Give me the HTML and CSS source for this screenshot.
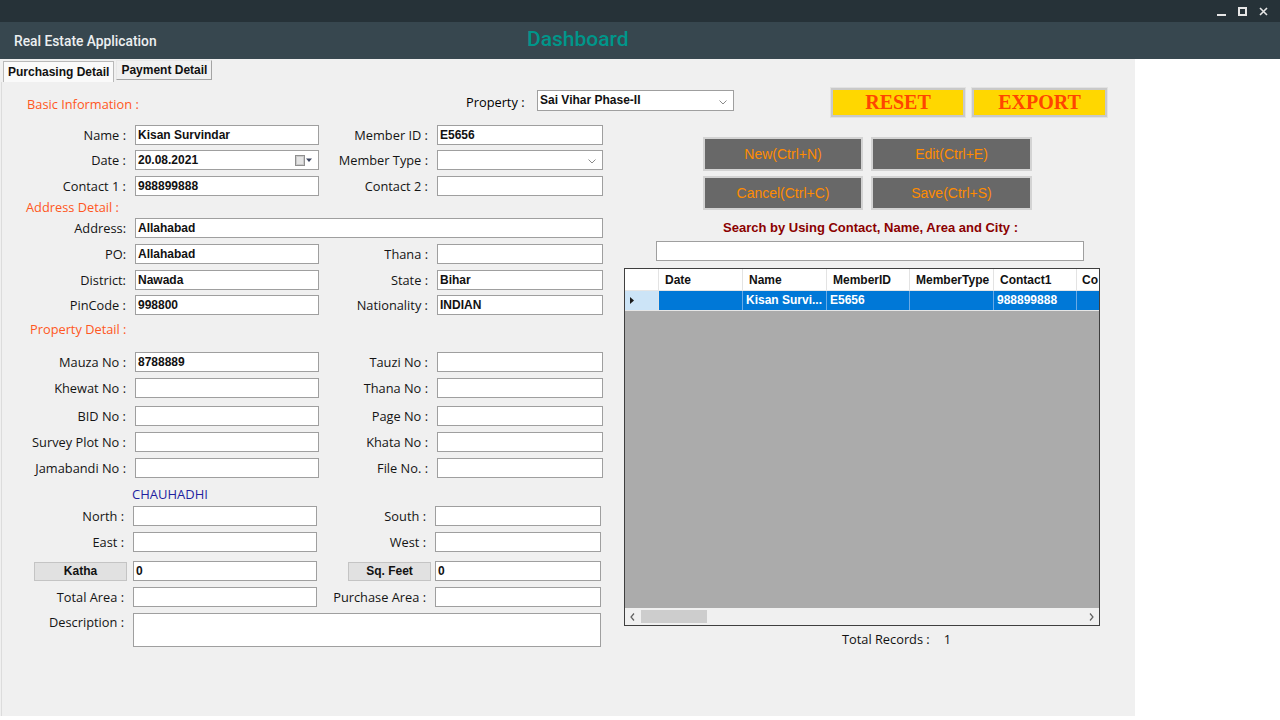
FILE: index.html
```html
<!DOCTYPE html>
<html lang="en">
<head>
<meta charset="utf-8">
<title>Real Estate Application</title>
<link rel="stylesheet" href="styles.css">
</head>
<body>
<div class="titlebar">
  <svg class="winbtn" width="9" height="9" viewBox="0 0 9 9"><path d="M0 8h9" stroke="#e6e6e6" stroke-width="2"/></svg>
  <svg class="winbtn" width="9" height="9" viewBox="0 0 9 9"><rect x="1" y="1" width="7" height="7" fill="none" stroke="#e6e6e6" stroke-width="2"/></svg>
  <svg class="winbtn" width="9" height="9" viewBox="0 0 9 9"><path d="M1 1l7 7M8 1l-7 7" stroke="#e6e6e6" stroke-width="1.6"/></svg>
</div>
<header class="appbar">
  <span class="apptitle">Real Estate Application</span>
  <span class="pagetitle">Dashboard</span>
</header>
<div class="main">
  <div class="panel">
    <div class="tabs">
      <div class="tab active">Purchasing Detail</div>
      <div class="tab">Payment Detail</div>
    </div>
    <div class="page">
      <div class="toprow">
        <div class="sec sec-basic">Basic Information :</div>
        <div class="prop-label">Property :</div>
        <div class="box select prop">Sai Vihar Phase-II
          <svg class="chev" width="8" height="5" viewBox="0 0 8 5"><path d="M0.5 0.5l3.5 3.5 3.5-3.5" fill="none" stroke="#8a8a8a" stroke-width="1"/></svg>
        </div>
        <button class="ybtn reset">RESET</button>
        <button class="ybtn export">EXPORT</button>
      </div>

      <div class="cols">
        <div class="form">
          <div class="row g8">
            <div class="lbl">Name :</div><div class="box">Kisan Survindar</div>
            <div class="lbl">Member ID :</div><div class="box">E5656</div>
          </div>
          <div class="row g5">
            <div class="lbl">Date :</div>
            <div class="box date">20.08.2021
              <svg class="cal" width="18" height="11" viewBox="0 0 18 11"><rect x="0.5" y="0.5" width="9" height="10" fill="#c9c9c9" stroke="#8f8f8f"/><rect x="2" y="2" width="6" height="7" fill="#e4e4e4"/><path d="M11 3.5h6l-3 3.5z" fill="#3d4660"/></svg>
            </div>
            <div class="lbl">Member Type :</div>
            <div class="box select">
              <svg class="chev" width="8" height="5" viewBox="0 0 8 5"><path d="M0.5 0.5l3.5 3.5 3.5-3.5" fill="none" stroke="#8a8a8a" stroke-width="1"/></svg>
            </div>
          </div>
          <div class="row g6">
            <div class="lbl">Contact 1 :</div><div class="box">988899888</div>
            <div class="lbl">Contact 2 :</div><div class="box"></div>
          </div>

          <div class="sec sec-addr g3">Address Detail :</div>
          <div class="row g3">
            <div class="lbl">Address:</div><div class="box wide">Allahabad</div>
          </div>
          <div class="row g6">
            <div class="lbl">PO:</div><div class="box">Allahabad</div>
            <div class="lbl">Thana :</div><div class="box"></div>
          </div>
          <div class="row g6">
            <div class="lbl">District:</div><div class="box">Nawada</div>
            <div class="lbl">State :</div><div class="box">Bihar</div>
          </div>
          <div class="row g5">
            <div class="lbl">PinCode :</div><div class="box">998800</div>
            <div class="lbl">Nationality :</div><div class="box">INDIAN</div>
          </div>

          <div class="sec sec-prop g6">Property Detail :</div>
          <div class="row g15">
            <div class="lbl">Mauza No :</div><div class="box">8788889</div>
            <div class="lbl">Tauzi No :</div><div class="box"></div>
          </div>
          <div class="row g6">
            <div class="lbl">Khewat No :</div><div class="box"></div>
            <div class="lbl">Thana No :</div><div class="box"></div>
          </div>
          <div class="row g8">
            <div class="lbl">BID No :</div><div class="box"></div>
            <div class="lbl">Page No :</div><div class="box"></div>
          </div>
          <div class="row g6">
            <div class="lbl">Survey Plot No :</div><div class="box"></div>
            <div class="lbl">Khata No :</div><div class="box"></div>
          </div>
          <div class="row g6">
            <div class="lbl">Jamabandi No :</div><div class="box"></div>
            <div class="lbl">File No. :</div><div class="box"></div>
          </div>

          <div class="chauhadhi g8">CHAUHADHI</div>
          <div class="row g4 shift">
            <div class="lbl">North :</div><div class="box"></div>
            <div class="lbl">South :</div><div class="box"></div>
          </div>
          <div class="row g6 shift">
            <div class="lbl">East :</div><div class="box"></div>
            <div class="lbl">West :</div><div class="box"></div>
          </div>
          <div class="row g9 shift">
            <button class="gbtn katha">Katha</button><div class="box">0</div>
            <button class="gbtn sqft">Sq. Feet</button><div class="box">0</div>
          </div>
          <div class="row g6 shift">
            <div class="lbl">Total Area :</div><div class="box"></div>
            <div class="lbl">Purchase Area :</div><div class="box"></div>
          </div>
          <div class="row desc g6 shift">
            <div class="lbl">Description :</div><div class="box wide tall"></div>
          </div>
        </div>

        <div class="side">
          <div class="actions">
            <button class="abtn">New(Ctrl+N)</button>
            <button class="abtn">Edit(Ctrl+E)</button>
            <button class="abtn">Cancel(Ctrl+C)</button>
            <button class="abtn">Save(Ctrl+S)</button>
          </div>
          <div class="search-label">Search by Using Contact, Name, Area and City :</div>
          <div class="box search"></div>
          <div class="grid">
            <div class="grow ghead">
              <div class="gc rh"></div>
              <div class="gc c1">Date</div>
              <div class="gc c2">Name</div>
              <div class="gc c3">MemberID</div>
              <div class="gc c4">MemberType</div>
              <div class="gc c5">Contact1</div>
              <div class="gc c6">Co</div>
            </div>
            <div class="grow gsel">
              <div class="gc rh"><svg width="4" height="7" viewBox="0 0 4 7"><path d="M0 0l4 3.5-4 3.5z" fill="#1a1a1a"/></svg></div>
              <div class="gc c1"></div>
              <div class="gc c2">Kisan Survi...</div>
              <div class="gc c3">E5656</div>
              <div class="gc c4"></div>
              <div class="gc c5">988899888</div>
              <div class="gc c6"></div>
            </div>
            <div class="gbody"></div>
            <div class="hscroll">
              <svg width="5" height="8" viewBox="0 0 5 8"><path d="M4 0.5l-3 3.5 3 3.5" fill="none" stroke="#606060" stroke-width="1.2"/></svg>
              <div class="track"><div class="thumb"></div></div>
              <svg width="5" height="8" viewBox="0 0 5 8"><path d="M1 0.5l3 3.5-3 3.5" fill="none" stroke="#606060" stroke-width="1.2"/></svg>
            </div>
          </div>
          <div class="total"><span>Total Records :</span><span class="count">1</span></div>
        </div>
      </div>
    </div>
  </div>
</div>
</body>
</html>
```

FILE: styles.css
```css
* { box-sizing: border-box; }
html, body { margin: 0; padding: 0; }
body {
  width: 1280px;
  height: 720px;
  overflow: hidden;
  background: #ffffff;
  font-family: "Open Sans", "Noto Sans", sans-serif;
  font-weight: 500;
  font-size: 12.8px;
  color: #000;
}
button { font: inherit; margin: 0; padding: 0; cursor: default; }

/* window title bar */
.titlebar {
  height: 22px;
  background: #263238;
  display: flex;
  justify-content: flex-end;
  align-items: center;
  gap: 12px;
  padding-right: 12px;
}
.winbtn { display: block; }

/* app bar */
.appbar {
  height: 37px;
  background: #37474f;
  display: flex;
  align-items: center;
}
.apptitle {
  width: 527px;
  padding-left: 14px;
  font-family: Roboto, "Noto Sans", sans-serif;
  font-weight: 500;
  font-size: 13.8px;
  color: #eceff1;
}
.pagetitle {
  font-family: Roboto, "Noto Sans", sans-serif;
  font-weight: 500;
  font-size: 21px;
  color: #00968a;
  margin-top: -3px;
}

/* main panel */
.main { display: flex; }
.panel {
  width: 1135px;
  height: 657px;
  background: #f0f0f0;
  display: flex;
  flex-direction: column;
}
.tabs {
  height: 23px;
  display: flex;
  align-items: flex-end;
  padding-left: 3px;
  gap: 2px;
}
.tab {
  font-family: "Liberation Sans", Arial, sans-serif;
  font-weight: bold;
  font-size: 12px;
  color: #111;
  white-space: nowrap;
  height: 20px;
  line-height: 18px;
  padding: 0 4px;
  border: 1px solid #a4a4a4;
  border-top-color: #e8e8e8;
  border-left-color: #e8e8e8;
  background: #f0f0f0;
  margin-bottom: 2px;
}
.tab.active {
  height: 21px;
  margin-bottom: 0;
  background: #fafafa;
  border-color: #b9b9b9;
  border-bottom: none;
  line-height: 21px;
}
.page {
  flex: 1;
  border-left: 1px solid #dcdcdc;
  margin-left: 1px;
}

/* top row */
.toprow {
  display: flex;
  align-items: center;
  height: 30px;
  margin-top: 5px;
}
.sec {
  color: #ff5722;
  height: 16px;
  line-height: 16px;
}
.sec-basic { width: 439px; margin-left: 25px; margin-top: 4px; }
.sec-addr { padding-left: 24px; }
.sec-prop { padding-left: 28px; }
.prop-label { width: 60px; margin-right: 11px; }
.box.prop { width: 197px; height: 21px; margin-top: -4px; }
.ybtn {
  font-family: "Liberation Serif", "Times New Roman", serif;
  font-weight: bold;
  font-size: 20px;
  color: #ff4500;
  background: #ffd700;
  border: 2px solid #c9c9c9;
  outline: 1px solid #e2e2e2;
  height: 29px;
  line-height: 24px;
}
.reset { width: 134px; margin-left: 97px; }
.export { width: 135px; margin-left: 7px; }

/* columns */
.cols { display: flex; }
.form { width: 609px; display: flex; flex-direction: column; }
.side {
  flex: 1;
  padding-left: 13px;
  padding-top: 20px;
  display: flex;
  flex-direction: column;
  align-items: flex-start;
}

/* form rows */
.row {
  display: grid;
  grid-template-columns: 126px 184px 104px 166px;
  column-gap: 7px;
  height: 20px;
  align-items: center;
}
.row.shift { grid-template-columns: 124px 184px 104px 166px; }
.lbl { text-align: right; white-space: nowrap; line-height: 16px; padding-right: 2px; color: #141414; }
.box {
  position: relative;
  height: 20px;
  background: #fff;
  border: 1px solid #9f9f9f;
  font-family: "Liberation Sans", Arial, sans-serif;
  font-weight: bold;
  font-size: 12px;
  line-height: 18px;
  padding-left: 2px;
  color: #111;
  white-space: nowrap;
}
.box.wide { grid-column: 2 / 5; }
.row.desc { height: 34px; align-items: start; }
.row.desc .lbl { padding-top: 1px; }
.box.tall { height: 34px; }
.select .chev { position: absolute; right: 6px; top: 8px; }
.box.prop .chev { right: 6px; top: 9px; }
.date .cal { position: absolute; right: 5px; top: 4px; }

.chauhadhi {
  height: 16px;
  line-height: 16px;
  padding-left: 130px;
  color: #1f1fa0;
  font-size: 13px;
}
.gbtn {
  justify-self: end;
  height: 19px;
  background: #e1e1e1;
  border: 1px solid #c4c4c4;
  font-family: "Liberation Sans", Arial, sans-serif;
  font-weight: bold;
  font-size: 12px;
  color: #111;
}
.katha { width: 93px; margin-right: -1px; }
.sqft { width: 83px; margin-right: -3px; }

/* vertical gaps */
.g3 { margin-top: 3px; }
.g4 { margin-top: 4px; }
.g5 { margin-top: 5px; }
.g6 { margin-top: 6px; }
.g8 { margin-top: 8px; }
.g9 { margin-top: 9px; }
.g15 { margin-top: 15px; }

/* right side */
.actions {
  display: grid;
  grid-template-columns: 160px 161px;
  column-gap: 8px;
  row-gap: 5px;
  margin-left: 79px;
}
.abtn {
  height: 34px;
  background: #686868;
  border: 2px solid #d3d3d3;
  color: #ff8c00;
  font-family: "Liberation Sans", Arial, sans-serif;
  font-weight: normal;
  font-size: 14px;
}
.search-label {
  margin-top: 10px;
  margin-left: 99px;
  height: 16px;
  line-height: 16px;
  color: #8b0000;
  font-family: "Liberation Sans", Arial, sans-serif;
  font-weight: bold;
  font-size: 13px;
}
.box.search { width: 428px; margin-left: 32px; margin-top: 5px; }

.grid {
  margin-top: 7px;
  width: 476px;
  height: 358px;
  border: 1px solid #3f3f3f;
  background: #ababab;
  display: flex;
  flex-direction: column;
  overflow: hidden;
  font-family: "Liberation Sans", Arial, sans-serif;
  font-weight: bold;
  font-size: 12px;
}
.grow { display: flex; flex: none; }
.gc { flex: none; white-space: nowrap; overflow: hidden; }
.rh { width: 34px; }
.c1 { width: 84px; }
.c2 { width: 84px; }
.c3 { width: 83px; }
.c4 { width: 84px; }
.c5 { width: 83px; }
.c6 { width: 23px; }
.ghead { height: 22px; background: #fff; border-bottom: 1px solid #e6e6e6; }
.ghead .gc {
  line-height: 22px;
  padding-left: 6px;
  border-right: 1px solid #e3e3e3;
  color: #111;
}
.ghead .c6 { padding-left: 5px; border-right: none; }
.gsel { height: 20px; background: #0078d7; border-bottom: 1px solid #e6e6e6; }
.gsel .gc {
  line-height: 19px;
  padding-left: 3px;
  color: #fff;
  border-right: 1px solid #6aaae6;
}
.gsel .c6 { border-right: none; }
.gsel .rh {
  background: #cce4f7;
  display: flex;
  align-items: center;
  padding-left: 5px;
  border-right: 1px solid #e3e3e3;
}
.gbody { flex: 1; }
.hscroll {
  height: 17px;
  background: #f0f0f0;
  display: flex;
  align-items: center;
  padding: 0 5px;
  gap: 6px;
}
.track { flex: 1; height: 13px; }
.thumb { width: 66px; height: 13px; background: #cdcdcd; }

.total {
  margin-top: 5px;
  margin-left: 218px;
  display: flex;
  gap: 14px;
  line-height: 16px;
  color: #111;
}
```
